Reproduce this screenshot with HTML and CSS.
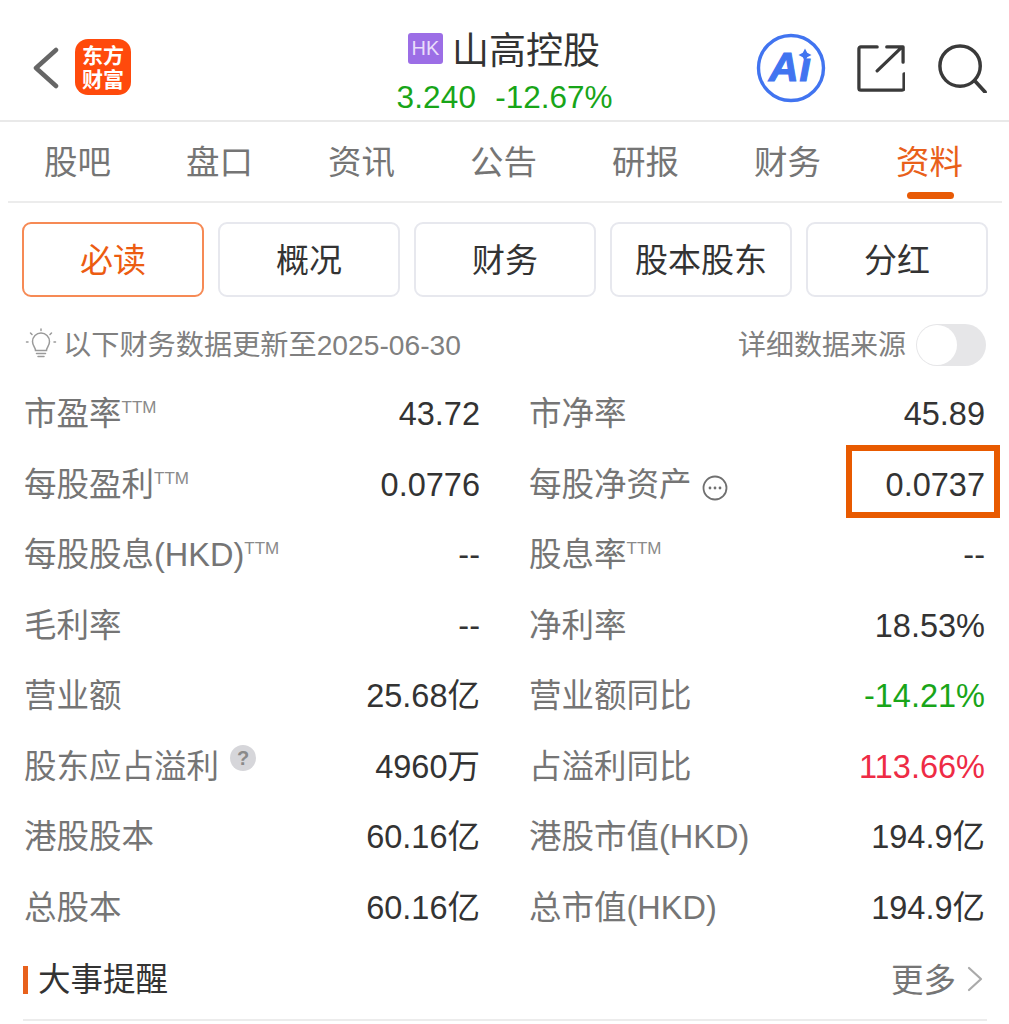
FILE: index.html
```html
<!DOCTYPE html>
<html lang="zh-CN">
<head>
<meta charset="utf-8">
<title>山高控股</title>
<link rel="stylesheet" href="styles.css">
</head>
<body>
<div class="page">
  <header class="header">
    <div class="header-left">
      <svg class="back" width="26" height="42" viewBox="0 0 26 42"><path d="M23 3 3 21l20 18" fill="none" stroke="#666" stroke-width="4.5" stroke-linecap="round" stroke-linejoin="round"/></svg>
      <div class="logo"><span class="logo-text">东方财富</span></div>
    </div>
    <div class="header-mid">
      <div class="title-line"><span class="hk">HK</span><span class="title">山高控股</span></div>
      <div class="price"><span class="last">3.240</span><span>-12.67%</span></div>
    </div>
    <div class="header-right">
      <svg class="ai" width="70" height="70" viewBox="0 0 70 70">
        <circle cx="35" cy="35" r="32.5" fill="none" stroke="#4174f0" stroke-width="3.4"/>
        <text x="13" y="48" class="ai-text">Aı</text>
        <path d="M49 15.500l2.200 4.300 4.300 2.200-4.300 2.200L49 28.500l-2.200-4.300-4.300-2.200 4.300-2.200z" fill="#4174f0"/>
      </svg>
      <svg class="share" width="48" height="48" viewBox="0 0 50 50"><path d="M21 3H4a2 2 0 0 0-2 2v41a2 2 0 0 0 2 2h43a2 2 0 0 0 2-2V31M21 28 47 3M31 3h17v16" fill="none" stroke="#3a3a3a" stroke-width="3.400" stroke-linecap="round" stroke-linejoin="round"/></svg>
      <svg class="search" width="50" height="49" viewBox="0 0 52 51"><circle cx="24" cy="23" r="21" fill="none" stroke="#3a3a3a" stroke-width="3.600"/><path d="M39 38l11 12" stroke="#3a3a3a" stroke-width="3.800" stroke-linecap="round"/></svg>
    </div>
  </header>

  <nav class="tabs">
    <a class="tab">股吧</a>
    <a class="tab">盘口</a>
    <a class="tab">资讯</a>
    <a class="tab">公告</a>
    <a class="tab">研报</a>
    <a class="tab">财务</a>
    <a class="tab tab-on">资料</a>
  </nav>

  <div class="buttons">
    <a class="btn btn-on">必读</a>
    <a class="btn">概况</a>
    <a class="btn">财务</a>
    <a class="btn">股本股东</a>
    <a class="btn">分红</a>
  </div>

  <div class="notice">
    <svg class="bulb" width="32" height="32" viewBox="0 0 32 32" fill="none" stroke="#9a9a9a" stroke-width="1.500" stroke-linecap="round"><path d="M10.500 22.500c0-3-3-4.500-3-9a8.500 8.500 0 0 1 17 0c0 4.500-3 6-3 9zM11.500 25.500h9M13 28.500h6M16 1v1.500M5.500 5l1.500 1.500M26.500 5 25 6.500M1.500 14H3M29 14h1.500"/></svg>
    <span class="notice-text">以下财务数据更新至2025-06-30</span>
    <span class="source">详细数据来源</span>
    <span class="toggle"><span class="knob"></span></span>
  </div>

  <div class="grid">
    <div class="row"><span class="label">市盈率<sup>TTM</sup></span><span class="val">43.72</span></div>
    <div class="row"><span class="label">市净率</span><span class="val">45.89</span></div>
    <div class="row"><span class="label">每股盈利<sup>TTM</sup></span><span class="val">0.0776</span></div>
    <div class="row"><span class="label">每股净资产</span>
      <svg class="dots" width="26" height="26" viewBox="0 0 26 26"><circle cx="13" cy="13" r="11.500" fill="none" stroke="#707070" stroke-width="1.800"/><circle cx="8" cy="13" r="1.400" fill="#707070"/><circle cx="13" cy="13" r="1.400" fill="#707070"/><circle cx="18" cy="13" r="1.400" fill="#707070"/></svg>
      <span class="val val-boxed">0.0737</span></div>
    <div class="row"><span class="label">每股股息(HKD)<sup>TTM</sup></span><span class="val">--</span></div>
    <div class="row"><span class="label">股息率<sup>TTM</sup></span><span class="val">--</span></div>
    <div class="row"><span class="label">毛利率</span><span class="val">--</span></div>
    <div class="row"><span class="label">净利率</span><span class="val">18.53%</span></div>
    <div class="row"><span class="label">营业额</span><span class="val">25.68亿</span></div>
    <div class="row"><span class="label">营业额同比</span><span class="val green">-14.21%</span></div>
    <div class="row"><span class="label">股东应占溢利</span><span class="help">?</span><span class="val">4960万</span></div>
    <div class="row"><span class="label">占溢利同比</span><span class="val red">113.66%</span></div>
    <div class="row"><span class="label">港股股本</span><span class="val">60.16亿</span></div>
    <div class="row"><span class="label">港股市值(HKD)</span><span class="val">194.9亿</span></div>
    <div class="row"><span class="label">总股本</span><span class="val">60.16亿</span></div>
    <div class="row"><span class="label">总市值(HKD)</span><span class="val">194.9亿</span></div>
  </div>

  <section class="section">
    <h2 class="section-title">大事提醒</h2>
    <span class="more">更多</span>
    <svg class="more-arrow" width="16" height="26" viewBox="0 0 16 26"><path d="M2 2l12 11L2 24" fill="none" stroke="#aaa" stroke-width="2.200" stroke-linecap="round" stroke-linejoin="round"/></svg>
  </section>
</div>
</body>
</html>
```

FILE: styles.css
```css
* { box-sizing: border-box; }
html, body { margin: 0; padding: 0; background: #fff; }
body {
  font-family: "Liberation Sans", "Noto Sans CJK SC", sans-serif;
  color: #333;
}
.page { width: 1009px; height: 1024px; overflow: hidden; }

.header {
  height: 122px;
  border-bottom: 2px solid #e9e9e9;
  display: grid;
  grid-template-columns: 1fr auto 1fr;
  align-items: start;
  padding: 0 22px 0 21px;
}
.header-left { display: flex; align-items: flex-start; gap: 16px; padding-left: 12px; }
.back { display: block; margin-top: 47px; }
.logo {
  width: 56px; height: 56px; border-radius: 13px; background: #ff4a0c; color: #fff;
  margin-top: 39px; padding-top: 3px;
  text-align: center;
  font-family: "Noto Sans CJK SC", sans-serif;
}
.logo-text {
  display: block; width: 44px; margin: 0 auto;
  font-weight: 700; font-size: 21px; line-height: 24px;
}
.header-mid { display: flex; flex-direction: column; align-items: center; }
.title-line { display: flex; align-items: center; height: 40px; margin-top: 28px; }
.hk {
  width: 35px; height: 31px; background: #9c6ee6; border-radius: 3px; color: #e9ddfb;
  font-size: 20px; line-height: 31px; text-align: center; margin-right: 9px;
}
.title { font-size: 37px; line-height: 40px; color: #333; font-family: "Noto Sans CJK SC", sans-serif; }
.price { display: flex; gap: 19px; font-size: 31.500px; line-height: 36px; color: #18a518; margin-top: 11px; padding-left: 1px; }
.last { letter-spacing: .2px; }
.header-right { display: flex; align-items: flex-start; justify-content: flex-end; }
.ai { margin: 33px 31px 0 0; }
.share { margin: 44px 32px 0 0; }
.search { margin: 44px 0 0 0; }
.ai-text { font: italic 700 41px "Liberation Sans", sans-serif; fill: #4174f0; stroke: #4174f0; stroke-width: 1.2px; letter-spacing: 1px; }

.tabs {
  display: grid;
  grid-template-columns: repeat(7, 142px);
  height: 81px;
  margin: 0 7px 0 8px;
  border-bottom: 2px solid #ececec;
}
.tab {
  position: relative;
  text-align: center;
  font-size: 33.500px;
  line-height: 82px;
  color: #757575;
  margin-left: -3px;
}
.tab-on { color: #e9601a; }
.tab-on::after {
  content: ""; position: absolute; left: 50%; bottom: 5px; width: 47px; height: 7px;
  margin-left: -23px; border-radius: 4px; background: #e85a05;
}

.buttons { display: grid; grid-template-columns: repeat(5, 182px); gap: 14px; padding: 19px 0 0 22px; }
.btn {
  height: 75px; border: 2px solid #e7e8ee; border-radius: 9px;
  text-align: center; font-size: 33px; line-height: 74px; color: #333;
}
.btn-on { border-color: #f68a55; color: #ec5c12; }

.notice { display: flex; align-items: center; height: 81px; padding: 10px 23px 0 25px; }
.bulb { margin-right: 6px; margin-top: 2px; }
.notice-text { font-size: 28.200px; color: #808080; }
.source { margin-left: auto; font-size: 28px; color: #808080; }
.toggle { width: 70px; height: 42px; border-radius: 21px; background: #e6e6e8; margin: 4px 0 0 10px; padding: 1px; }
.knob { display: block; width: 40px; height: 40px; border-radius: 50%; background: #fff; }

.grid {
  display: grid; grid-template-columns: 456px 456px; column-gap: 49px;
  grid-auto-rows: 70.500px; padding: 0 0 0 24px;
}
.row { display: flex; align-items: center; position: relative; padding-top: 2px; }
.label { font-size: 32.500px; color: #757575; white-space: nowrap; line-height: 40px; }
.label sup { font-size: 17px; line-height: 0; vertical-align: 12px; color: #8a8a8a; }
.val { margin-left: auto; font-size: 32.500px; color: #333; white-space: nowrap; line-height: 40px; }
.green { color: #19a519; }
.red { color: #ee2b45; }
.dots { margin-left: 10px; margin-top: 6px; }
.help {
  width: 26px; height: 26px; border-radius: 50%; background: #d6d6da; color: #8a8a8a;
  font-size: 20px; font-weight: 700; line-height: 26px; text-align: center;
  margin: -18px 0 0 11px;
}
.val-boxed { position: relative; }
.val-boxed::after {
  content: ""; position: absolute; top: -20px; bottom: -13px; left: -40px; right: -15px;
  border: 6px solid #e85a00;
}

.section { display: flex; align-items: center; height: 81px; margin: -2px 22px 0 23px; border-bottom: 2px solid #ececec; }
.section-title {
  margin: 0; font-size: 32.500px; font-weight: 400; color: #333; line-height: 28px;
  border-left: 5px solid #e8611c; padding-left: 10px;
}
.more { margin: -4px 0 0 auto; font-size: 32.500px; color: #757575; }
.more-arrow { margin: -2px 4px 0 11px; }
```
